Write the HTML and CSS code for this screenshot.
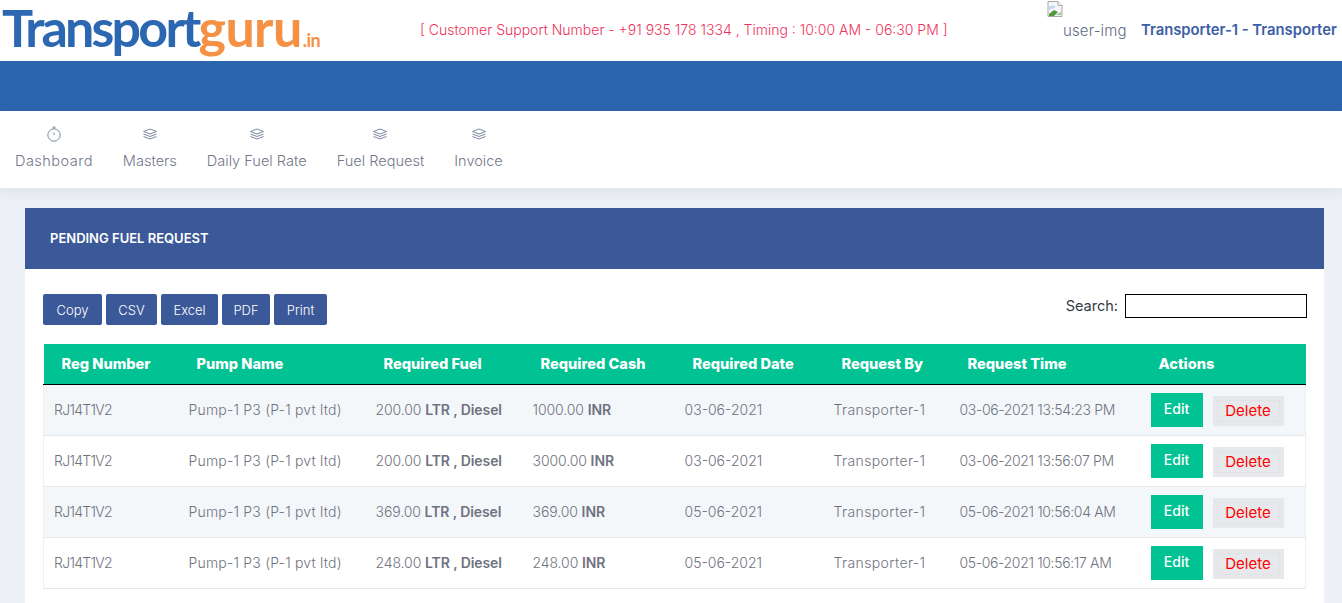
FILE: index.html
```html
<!DOCTYPE html>
<html lang="en">
<head>
<meta charset="utf-8">
<title>Pending Fuel Request</title>
<link rel="stylesheet" href="styles.css">
</head>
<body>
<header class="topbar">
  <a class="logo"><span class="logo-blue">Transport</span><span class="logo-orange">guru</span><span class="logo-in">.in</span></a>
  <p class="support">[ Customer Support Number - +91 935 178 1334 , Timing : 10:00 AM - 06:30 PM ]</p>
  <div class="user">
    <div class="user-img">
      <svg class="broken" viewBox="0 0 16 16" width="16" height="16"><path d="M1 .5h10l4 4v11H1z" fill="#f4f6fa" stroke="#a8a8a8"/><path d="M11 .5v4h4" fill="#fff" stroke="#a8a8a8"/><path d="M2 6c2-2 5-2 7 0l-7 3z" fill="#c4d6f2"/><path d="M2 15v-2l5-4 4 2-4 4z" fill="#4f9a3a"/><path d="M9 14l5-3v3z" fill="#9ac58c"/></svg>
      <span class="alt">user-img</span>
    </div>
    <span class="user-name">Transporter-1 - Transporter</span>
  </div>
</header>
<div class="bluebar"></div>
<nav class="nav">
  <a class="nav-item nav-first"><svg class="ico" viewBox="0 0 16 16"><circle cx="8" cy="9" r="6.2"/><path d="M6.5 1.2h3M8 1.2v1.6M8 6.5V9"/></svg><span>Dashboard</span></a>
  <a class="nav-item"><svg class="ico" viewBox="0 0 16 16"><path d="M8 3l6.5 2.5L8 8 1.5 5.5zM1.5 8L8 10.5 14.5 8M1.5 10.5L8 13l6.5-2.5"/></svg><span>Masters</span></a>
  <a class="nav-item"><svg class="ico" viewBox="0 0 16 16"><path d="M8 3l6.5 2.5L8 8 1.5 5.5zM1.5 8L8 10.5 14.5 8M1.5 10.5L8 13l6.5-2.5"/></svg><span>Daily Fuel Rate</span></a>
  <a class="nav-item"><svg class="ico" viewBox="0 0 16 16"><path d="M8 3l6.5 2.5L8 8 1.5 5.5zM1.5 8L8 10.5 14.5 8M1.5 10.5L8 13l6.5-2.5"/></svg><span>Fuel Request</span></a>
  <a class="nav-item"><svg class="ico" viewBox="0 0 16 16"><path d="M8 3l6.5 2.5L8 8 1.5 5.5zM1.5 8L8 10.5 14.5 8M1.5 10.5L8 13l6.5-2.5"/></svg><span>Invoice</span></a>
</nav>
<main class="content">
  <section class="card">
    <h1 class="card-title">PENDING FUEL REQUEST</h1>
    <div class="card-body">
      <div class="tools">
        <div class="export">
          <button class="tool-btn">Copy</button>
          <button class="tool-btn">CSV</button>
          <button class="tool-btn">Excel</button>
          <button class="tool-btn">PDF</button>
          <button class="tool-btn">Print</button>
        </div>
        <label class="search">Search: <input class="search-input" type="text"></label>
      </div>
      <table class="grid">
        <colgroup>
          <col class="c1"><col class="c2"><col class="c3"><col class="c4"><col class="c5"><col class="c6"><col class="c7"><col class="c8">
        </colgroup>
        <thead>
          <tr><th>Reg Number</th><th>Pump Name</th><th>Required Fuel</th><th>Required Cash</th><th>Required Date</th><th>Request By</th><th>Request Time</th><th>Actions</th></tr>
        </thead>
        <tbody>
          <tr><td>RJ14T1V2</td><td>Pump-1 P3 (P-1 pvt ltd)</td><td>200.00 <b>LTR , Diesel</b></td><td>1000.00 <b>INR</b></td><td>03-06-2021</td><td>Transporter-1</td><td>03-06-2021 13:54:23 PM</td><td class="acts"><button class="edit">Edit</button><button class="del">Delete</button></td></tr>
          <tr><td>RJ14T1V2</td><td>Pump-1 P3 (P-1 pvt ltd)</td><td>200.00 <b>LTR , Diesel</b></td><td>3000.00 <b>INR</b></td><td>03-06-2021</td><td>Transporter-1</td><td>03-06-2021 13:56:07 PM</td><td class="acts"><button class="edit">Edit</button><button class="del">Delete</button></td></tr>
          <tr><td>RJ14T1V2</td><td>Pump-1 P3 (P-1 pvt ltd)</td><td>369.00 <b>LTR , Diesel</b></td><td>369.00 <b>INR</b></td><td>05-06-2021</td><td>Transporter-1</td><td>05-06-2021 10:56:04 AM</td><td class="acts"><button class="edit">Edit</button><button class="del">Delete</button></td></tr>
          <tr><td>RJ14T1V2</td><td>Pump-1 P3 (P-1 pvt ltd)</td><td>248.00 <b>LTR , Diesel</b></td><td>248.00 <b>INR</b></td><td>05-06-2021</td><td>Transporter-1</td><td>05-06-2021 10:56:17 AM</td><td class="acts"><button class="edit">Edit</button><button class="del">Delete</button></td></tr>
        </tbody>
      </table>
    </div>
  </section>
</main>
</body>
</html>
```
FILE: styles.css
```css
* { box-sizing: border-box; }
html, body { margin: 0; height: 100%; overflow: hidden; }
body { background: #edf0f6; font-family: "Inter", "Noto Sans", sans-serif; font-size: 14px; color: #74788a; }

.topbar { height: 61px; background: #fff; display: flex; align-items: flex-start; position: relative; }
.logo { width: 420px; height: 61px; padding: 0 0 0 2px; font-family: "Lato", sans-serif; font-weight: 700; line-height: 55px; font-size: 52px; letter-spacing: -2.8px; white-space: nowrap; }
.logo-blue { color: #2b68b1; }
.logo-orange { color: #f59145; letter-spacing: -.6px; }
.logo-in { color: #f59145; font-size: 18px; letter-spacing: -.5px; margin-left: 1px; }
.support { margin: 21px 0 0; width: 627px; font-size: 14px; line-height: 18px; color: #f0325a; font-weight: 300; white-space: nowrap; }
.user { display: flex; flex: 1; }
.user-img { width: 94px; position: relative; height: 61px; }
.broken { display: block; margin-top: 1px; }
.alt { position: absolute; left: 16px; top: 22px; font-size: 15px; font-weight: 300; letter-spacing: .15px; color: #5f6b85; line-height: 18px; }
.user-name { margin-top: 21px; line-height: 18px; font-size: 14.8px; font-weight: 600; color: #3b5ea6; white-space: nowrap; }

.bluebar { height: 50px; background: #2b65b0; }

.nav { height: 77px; background: #fff; display: flex; gap: 30px; padding: 15px 0 0 15px; box-shadow: 0 2px 14px rgba(60, 70, 100, .1); position: relative; }
.nav-item { display: flex; flex-direction: column; align-items: center; gap: 9px; color: #74788a; font-size: 14.55px; font-weight: 300; line-height: 20px; }
.nav-first { letter-spacing: .45px; }
.ico { width: 16px; height: 16px; fill: none; stroke: #7c88a4; stroke-width: 1; }

.content { padding: 20px 18px 0 25px; }
.card { background: #fff; }
.card-title { margin: 0; height: 61px; background: #3b5998; color: #fff; font-size: 13px; font-weight: 600; line-height: 61px; padding-left: 25px; }
.card-body { padding: 25px 18px 15px 18px; }

.tools { display: flex; justify-content: space-between; height: 50px; }
.export { display: grid; grid-template-columns: 59px 51px 57px 48px 53px; gap: 4px; height: 31px; }
.tool-btn { height: 31px; border: 0; border-radius: 2px; background: #3b5998; color: #fff; font: 300 13px "Inter", sans-serif; padding: 0; }
.search { color: #343a46; font-size: 14.5px; display: flex; gap: 7px; align-items: flex-start; line-height: 24px; margin-right: -1px; }
.search-input { width: 182px; height: 24px; border: 1px solid #000; background: #fff; margin: 0; }

.grid { width: 1262px; border-collapse: collapse; table-layout: fixed; }
.c1 { width: 135px; } .c2 { width: 187px; } .c3 { width: 157px; } .c4 { width: 152px; }
.c5 { width: 149px; } .c6 { width: 126px; } .c7 { width: 191px; } .c8 { width: 165px; }
th { height: 40px; background: #00c292; color: #fff; text-align: left; padding: 0 18px; font-size: 14.6px; font-weight: 800; border-bottom: 1.5px solid #000; white-space: nowrap; }
td { height: 51px; padding: 0 10px; font-weight: 300; font-size: 14px; color: #6f7380; border-bottom: 1px solid #e6e8ea; white-space: nowrap; }
td:first-child { border-left: 1px solid #eef0f2; letter-spacing: -.7px; }
td:nth-child(2) { letter-spacing: .2px; }
td:nth-child(3), td:nth-child(4) { letter-spacing: -.1px; }
td:nth-child(6) { letter-spacing: .4px; }
td:nth-child(7) { letter-spacing: -.35px; }
td:last-child { border-right: 1px solid #eef0f2; }
tbody tr:nth-child(odd) td { background: #f4f7fa; }
td b { font-weight: 600; }
.acts > * { vertical-align: middle; }
.edit { width: 52px; height: 34px; border: 0; background: #00c292; color: #fff; font: 500 14px "Inter", sans-serif; margin-right: 10px; padding: 0 0 3px; }
.del { width: 71px; height: 30px; border: 0; background: #e6e8eb; color: #f00; font: 400 15px "Inter", sans-serif; margin-top: 2px; padding: 0; outline: 1px dotted #dcdee1; outline-offset: -5px; }
```
